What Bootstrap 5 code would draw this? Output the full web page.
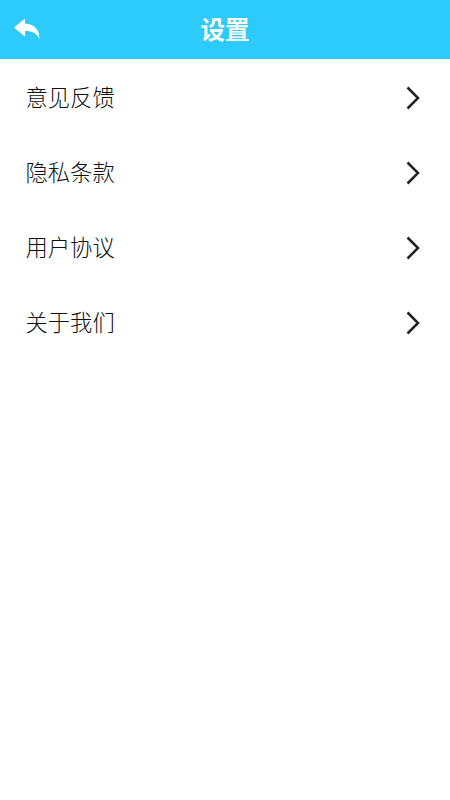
<!doctype html>
<html lang="zh">
<head>
<meta charset="utf-8">
<title>设置</title>
<link rel="stylesheet" href="https://cdn.jsdelivr.net/npm/bootstrap@5.3.0/dist/css/bootstrap.min.css">
<style>
body { background:#fff; font-family:"Noto Sans CJK SC","Liberation Sans",sans-serif; }
.top-bar { height:59px; background:#2ccbfb; }
.back-btn { left:14px; top:18px; line-height:0; }
.top-title { font-size:24.500px; font-weight:700; color:#fff; line-height:1; }
.menu-row { height:75px; padding:0 30px 0 25.500px; font-size:22.300px; font-weight:300; color:#111; line-height:1; border:0; }
.row-label { padding-bottom:3px; }
.menu-wrap { padding-top:1px; }
</style>
</head>
<body>
<header class="top-bar position-relative d-flex align-items-center justify-content-center">
  <a class="back-btn position-absolute" href="#" aria-label="返回">
    <svg width="26" height="22" viewBox="0 0 27 22"><path fill="#fff" d="M0 9.500 11.500 0V5.500C20.500 5.800 26.500 11 26.500 21.500 23.500 15.500 19 13.200 11.500 13.200V19Z"/></svg>
  </a>
  <div class="top-title">设置</div>
</header>
<div class="list-group list-group-flush menu-wrap">
  <a href="#" class="list-group-item menu-row d-flex align-items-center justify-content-between"><span class="row-label">意见反馈</span>
    <svg width="14" height="24" viewBox="0 0 14 24"><path fill="none" stroke="#222" stroke-width="2.500" d="M1.500 1.500 12 12 1.500 22.500"/></svg></a>
  <a href="#" class="list-group-item menu-row d-flex align-items-center justify-content-between"><span class="row-label">隐私条款</span>
    <svg width="14" height="24" viewBox="0 0 14 24"><path fill="none" stroke="#222" stroke-width="2.500" d="M1.500 1.500 12 12 1.500 22.500"/></svg></a>
  <a href="#" class="list-group-item menu-row d-flex align-items-center justify-content-between"><span class="row-label">用户协议</span>
    <svg width="14" height="24" viewBox="0 0 14 24"><path fill="none" stroke="#222" stroke-width="2.500" d="M1.500 1.500 12 12 1.500 22.500"/></svg></a>
  <a href="#" class="list-group-item menu-row d-flex align-items-center justify-content-between"><span class="row-label">关于我们</span>
    <svg width="14" height="24" viewBox="0 0 14 24"><path fill="none" stroke="#222" stroke-width="2.500" d="M1.500 1.500 12 12 1.500 22.500"/></svg></a>
</div>
<script src="https://cdn.jsdelivr.net/npm/bootstrap@5.3.0/dist/js/bootstrap.bundle.min.js"></script>
</body>
</html>
